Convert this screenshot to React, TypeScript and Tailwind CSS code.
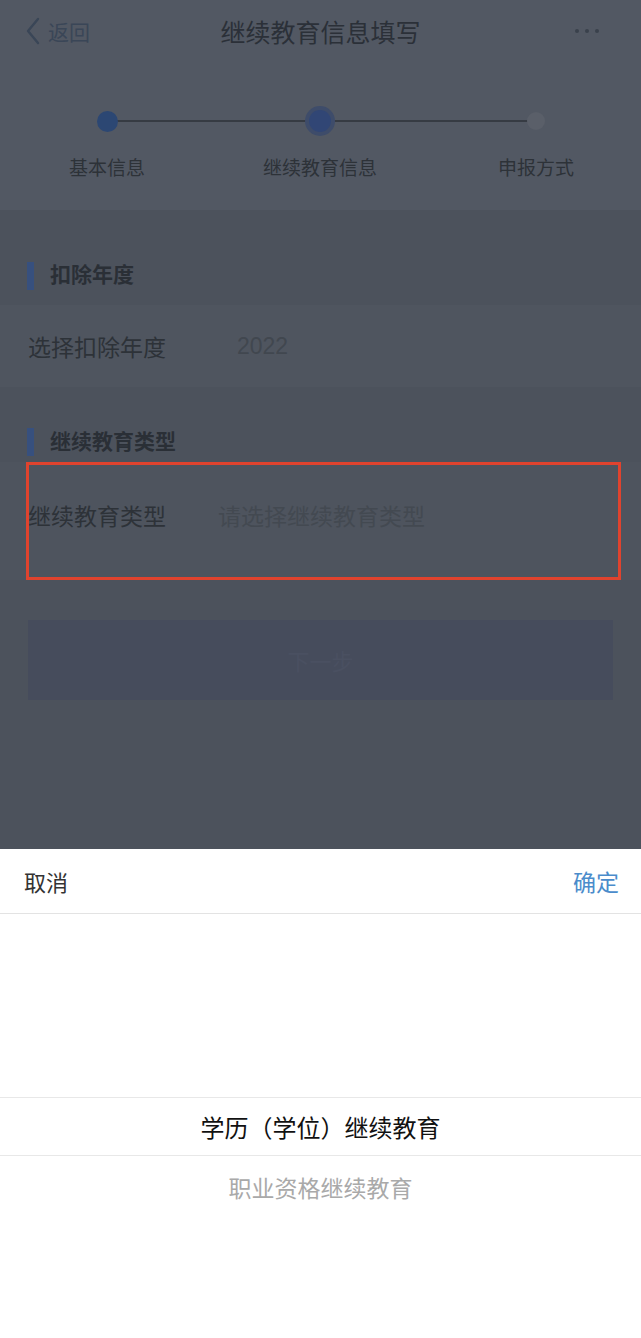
import React from "react";

const font = { fontFamily: '"Noto Sans CJK SC", "Noto Sans", sans-serif' };

export default function App() {
  return (
    <div className="w-[641px] h-[1338px] flex flex-col overflow-hidden" style={font}>
      {/* dimmed page */}
      <div className="h-[849px] flex flex-col bg-[#4c525c]">
        {/* header */}
        <div className="h-[62px] bg-[#525863] flex items-center relative px-[24px]">
          <div className="flex items-center gap-[6px] text-[#3a4657]">
            <svg width="18" height="28" viewBox="0 0 18 28" fill="none">
              <path d="M14 2 L4 14 L14 26" stroke="#3a4657" strokeWidth="2.4" strokeLinecap="round" strokeLinejoin="round" />
            </svg>
            <span className="text-[21px] leading-none">返回</span>
          </div>
          <div className="absolute left-0 right-0 flex justify-center pointer-events-none">
            <span className="text-[25px] leading-none text-[#2b3038]">继续教育信息填写</span>
          </div>
          <div className="ml-auto mr-[18px] flex gap-[6px] items-center">
            <span className="w-[4px] h-[4px] rounded-full bg-[#3a414c]" />
            <span className="w-[4px] h-[4px] rounded-full bg-[#3a414c]" />
            <span className="w-[4px] h-[4px] rounded-full bg-[#3a414c]" />
          </div>
        </div>

        {/* stepper */}
        <div className="h-[148px] bg-[#525863] relative">
          <div className="absolute left-[107px] right-[105px] top-[58px] h-[2px] bg-[#363b43]" />
          <div className="flex pt-[46px] relative">
            <div className="w-[160px] ml-[27px] flex flex-col items-center">
              <div className="h-[26px] flex items-center justify-center">
                <span className="w-[21px] h-[21px] rounded-full bg-[#2c4773]" />
              </div>
              <span className="mt-[23px] text-[19px] leading-none text-[#2d3238]">基本信息</span>
            </div>
            <div className="w-[160px] ml-[53px] flex flex-col items-center">
              <div className="h-[26px] flex items-center justify-center">
                <span className="w-[30px] h-[30px] rounded-full bg-[#3e4c6a] flex items-center justify-center">
                  <span className="w-[22px] h-[22px] rounded-full bg-[#314675]" />
                </span>
              </div>
              <span className="mt-[23px] text-[19px] leading-none text-[#2d3238]">继续教育信息</span>
            </div>
            <div className="w-[160px] ml-[56px] flex flex-col items-center">
              <div className="h-[26px] flex items-center justify-center">
                <span className="w-[18px] h-[18px] rounded-full bg-[#5a5f69]" />
              </div>
              <span className="mt-[23px] text-[19px] leading-none text-[#2d3238]">申报方式</span>
            </div>
          </div>
        </div>

        {/* section 1 */}
        <div className="flex items-center gap-[16px] pl-[27px] mt-[52px] h-[28px]">
          <span className="w-[7px] h-[28px] bg-[#37507e]" />
          <span className="text-[21px] font-bold leading-none text-[#2a2f36] mt-[-5px]">扣除年度</span>
        </div>
        <div className="mt-[15px] h-[82px] bg-[#4f555f] flex items-center pl-[28px]">
          <span className="text-[23px] leading-none text-[#2d3238] w-[209px]">选择扣除年度</span>
          <span className="text-[23px] leading-none text-[#41474f]" style={{ fontFamily: '"Liberation Sans", sans-serif' }}>2022</span>
        </div>

        {/* section 2 */}
        <div className="flex items-center gap-[16px] pl-[27px] mt-[41px] h-[28px]">
          <span className="w-[7px] h-[28px] bg-[#37507e]" />
          <span className="text-[21px] font-bold leading-none text-[#2a2f36] mt-[-4px]">继续教育类型</span>
        </div>
        <div className="mt-[6px] h-[118px] relative bg-[#4e545e] flex items-center pl-[28px] pb-[12px]">
          <span className="text-[23px] leading-none text-[#2d3238] w-[190px]">继续教育类型</span>
          <span className="text-[23px] leading-none text-[#434951]">请选择继续教育类型</span>
          <div className="absolute left-[26px] top-0 w-[595px] h-[118px] border-[3px] border-[#e0432e]" />
        </div>

        {/* button */}
        <div className="mt-[40px] mx-[28px] h-[80px] bg-[#464c5c] flex items-center justify-center">
          <span className="text-[22px] leading-none text-[#4a5061]">下一步</span>
        </div>
      </div>

      {/* bottom sheet */}
      <div className="flex-1 bg-white flex flex-col">
        <div className="h-[65px] flex items-center justify-between px-[24px] border-b border-[#e3e3e3]">
          <span className="text-[22px] leading-none text-[#333333]">取消</span>
          <span className="text-[23px] leading-none text-[#4b8ccb] mr-[-2px]">确定</span>
        </div>
        <div className="h-[183px]" />
        <div className="h-[59px] border-t border-b border-[#e8e8e8] flex items-center justify-center">
          <span className="text-[24px] leading-none text-[#111111]">学历（学位）继续教育</span>
        </div>
        <div className="h-[62px] flex items-center justify-center">
          <span className="text-[23px] leading-none text-[#a9a9a9]">职业资格继续教育</span>
        </div>
      </div>
    </div>
  );
}
